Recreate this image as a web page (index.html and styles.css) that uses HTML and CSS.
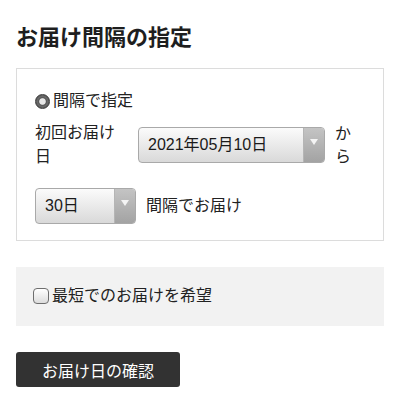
FILE: index.html
```html
<!DOCTYPE html>
<html lang="ja">
<head>
<meta charset="utf-8">
<link rel="stylesheet" href="styles.css">
</head>
<body>
<div class="page">
  <h1 class="title">お届け間隔の指定</h1>
  <div class="panel">
    <label class="radio-row"><span class="radio"></span><span>間隔で指定</span></label>
    <div class="row first-row">
      <span class="label">初回お届け日</span>
      <div class="select date-select"><span class="value">2021年05月10日</span><span class="arrow"><svg width="8" height="6" viewBox="0 0 8 6"><path d="M0 0H8L4 6Z" fill="#f4f4f4"/></svg></span></div>
      <span class="from">から</span>
    </div>
    <div class="row second-row">
      <div class="select interval-select"><span class="value">30日</span><span class="arrow"><svg width="8" height="6" viewBox="0 0 8 6"><path d="M0 0H8L4 6Z" fill="#f4f4f4"/></svg></span></div>
      <span class="suffix">間隔でお届け</span>
    </div>
  </div>
  <div class="shortest">
    <label class="check-row"><span class="checkbox"></span><span>最短でのお届けを希望</span></label>
  </div>
  <button class="confirm">お届け日の確認</button>
</div>
</body>
</html>
```

FILE: styles.css
```css
* { box-sizing: border-box; }
html, body { margin: 0; padding: 0; background: #fff; }
body {
  font-family: "Liberation Sans", "Noto Sans CJK JP", sans-serif;
  color: #222;
  font-size: 16px;
  line-height: 24px;
}
.page { padding: 0 16px; width: 400px; }
.title {
  margin: 23px 0 15px;
  font-size: 22px;
  line-height: 30px;
  font-weight: bold;
  color: #1e1e1e;
}
.panel {
  border: 1px solid #dcdcdc;
  padding: 20px 18px 16px;
  width: 368px;
}
.radio-row, .check-row {
  display: flex;
  align-items: center;
  height: 24px;
}
.radio {
  width: 15px;
  height: 15px;
  border-radius: 50%;
  border: 1px solid #3a3a3a;
  background: radial-gradient(circle, #e8e8e8 0 2.8px, #555 3.8px, #6a6a6a 5px, #444 100%);
  margin-right: 3px;
  flex: none;
}
.row { display: flex; align-items: center; }
.first-row { margin-top: 8px; }
.second-row { margin-top: 19px; }
.label { width: 88px; margin-right: 15px; flex: none; }
.select {
  display: flex;
  height: 36px;
  border: 1px solid #a9a9a9;
  border-radius: 4px;
  background: linear-gradient(#fbfbfb, #d9d9d9);
  overflow: hidden;
  flex: none;
}
.select .value {
  flex: 1;
  padding-left: 9px;
  line-height: 34px;
  color: #1a1a1a;
}
.select .arrow {
  width: 21px;
  flex: none;
  border-left: 1px solid #b5b5b5;
  background: linear-gradient(#c4c4c4, #a3a3a3);
  display: flex;
  align-items: flex-start;
  justify-content: center;
  padding-top: 11px;
}
.date-select { width: 187px; }
.interval-select { width: 101px; }
.from { width: 16px; margin-left: 10px; line-height: 23px; }
.suffix { margin-left: 10px; }
.shortest {
  margin-top: 26px;
  background: #f2f2f2;
  padding: 17px 17px 18px;
  width: 368px;
}
.checkbox {
  width: 16px;
  height: 16px;
  border: 1px solid #6e6e6e;
  border-radius: 4px;
  background: linear-gradient(#ffffff, #dcdcdc);
  margin-right: 3px;
  flex: none;
}
.confirm {
  display: block;
  margin-top: 26px;
  width: 164px;
  height: 35px;
  border: none;
  border-radius: 3px;
  background: #323232;
  color: #fff;
  font-family: inherit;
  font-size: 16px;
  padding: 0;
}
```
